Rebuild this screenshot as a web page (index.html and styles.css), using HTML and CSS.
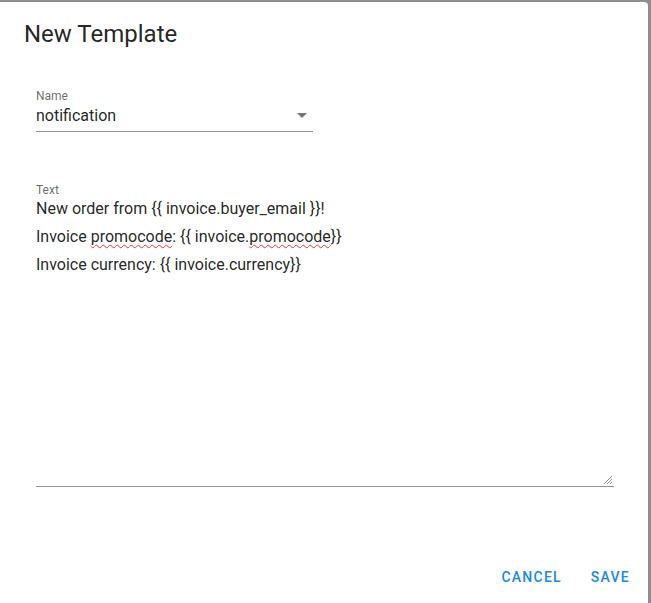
FILE: index.html
```html
<!DOCTYPE html>
<html>
<head>
<meta charset="utf-8">
<link rel="stylesheet" href="styles.css">
</head>
<body>
<div class="dialog">
  <div class="title">New Template</div>
  <div class="body">
    <div class="field select-field">
      <div class="label">Name</div>
      <div class="control">
        <span class="value">notification</span>
        <span class="arrow"></span>
      </div>
    </div>
    <div class="field text-field">
      <div class="label">Text</div>
      <div class="area">
        <div class="line">New order from {{ invoice.buyer_email }}!</div>
        <div class="line">Invoice <span class="typo">promocode</span>: {{ invoice.<span class="typo">promocode</span>}}</div>
        <div class="line">Invoice currency: {{ invoice.currency}}</div>
        <svg class="grip" width="10" height="10" viewBox="0 0 10 10">
          <path d="M9 1L1 9M9 4L4 9M9 7L7 9" stroke="#888" stroke-width="1" fill="none"/>
        </svg>
      </div>
    </div>
  </div>
  <div class="actions">
    <button class="btn">Cancel</button>
    <button class="btn">Save</button>
  </div>
</div>
</body>
</html>
```
FILE: styles.css
```css
html, body {
  margin: 0;
  padding: 0;
  background: #8e8e8e;
  height: 603px;
  overflow: hidden;
}
body {
  font-family: Roboto, "Liberation Sans", sans-serif;
  color: rgba(0, 0, 0, 0.87);
}
.dialog {
  margin-top: 2px;
  width: 648px;
  height: 610px;
  background: #fff;
  border-top-right-radius: 4px;
  display: flex;
  flex-direction: column;
}
.title {
  padding: 16px 24px 10px;
  font-size: 24px;
  line-height: 32px;
  font-weight: 400;
}
.body {
  padding: 28px 34px 0 36px;
}
.label {
  font-size: 12px;
  line-height: 16px;
  color: rgba(0, 0, 0, 0.6);
}
.select-field {
  width: 277px;
}
.control {
  display: flex;
  align-items: center;
  justify-content: space-between;
  height: 24px;
  padding-bottom: 3px;
  border-bottom: 1px solid rgba(0, 0, 0, 0.42);
  font-size: 16px;
  line-height: 24px;
}
.arrow {
  width: 0;
  height: 0;
  border-left: 5px solid transparent;
  border-right: 5px solid transparent;
  border-top: 5px solid #757575;
  margin-right: 6px;
  margin-top: -1px;
}
.text-field {
  margin-top: 50px;
}
.area {
  position: relative;
  width: 578px;
  height: 291px;
  margin-top: -3px;
  border-bottom: 1px solid rgba(0, 0, 0, 0.42);
  font-size: 16px;
  line-height: 28px;
}
.line {
  height: 28px;
}
.typo {
  text-decoration: underline wavy #e53935;
  text-decoration-thickness: 1px;
  text-underline-offset: 2px;
  text-decoration-skip-ink: none;
}
.grip {
  position: absolute;
  right: 1px;
  bottom: 1px;
}
.actions {
  display: flex;
  justify-content: flex-end;
  gap: 13px;
  padding: 72px 10px 0 0;
}
.btn {
  background: none;
  border: none;
  height: 36px;
  padding: 0 8px;
  font-family: Roboto, "Liberation Sans", sans-serif;
  font-size: 14px;
  font-weight: 500;
  letter-spacing: 0.0892857143em;
  text-transform: uppercase;
  color: #1e88e5;
}
```
